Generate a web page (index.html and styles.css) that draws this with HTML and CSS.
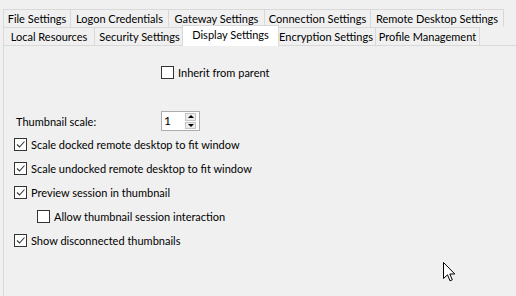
FILE: index.html
```html
<!DOCTYPE html>
<html lang="en">

<head>
    <meta charset="UTF-8">
    <title>Display Settings</title>
    <link rel="stylesheet" href="styles.css">
</head>

<body>
    <div class="tabs">
        <div class="tab-row">
            <div class="tab t-file">File Settings</div>
            <div class="tab t-logon">Logon Credentials</div>
            <div class="tab t-gateway">Gateway Settings</div>
            <div class="tab t-conn">Connection Settings</div>
            <div class="tab t-remote">Remote Desktop Settings</div>
        </div>
        <div class="tab-row">
            <div class="tab t-local">Local Resources</div>
            <div class="tab t-security">Security Settings</div>
            <div class="tab t-display selected">Display Settings</div>
            <div class="tab t-encrypt">Encryption Settings</div>
            <div class="tab t-profile">Profile Management</div>
        </div>
    </div>

    <div class="panel">
        <label class="check-row inherit">
            <span class="box"></span>
            <span>Inherit from parent</span>
        </label>

        <div class="scale-row">
            <span class="scale-label">Thumbnail scale:</span>
            <div class="spinner">
                <span class="spin-value">1</span>
                <div class="spin-buttons">
                    <span class="spin-btn"><span class="arrow-up"></span></span>
                    <span class="spin-btn"><span class="arrow-down"></span></span>
                </div>
            </div>
        </div>

        <label class="check-row">
            <span class="box checked"><svg viewBox="0 0 11 11" width="11" height="11"><path d="M2 5.5 L4.5 8 L9.5 2.5" fill="none" stroke="#333" stroke-width="1.1"/></svg></span>
            <span>Scale docked remote desktop to fit window</span>
        </label>
        <label class="check-row">
            <span class="box checked"><svg viewBox="0 0 11 11" width="11" height="11"><path d="M2 5.5 L4.5 8 L9.5 2.5" fill="none" stroke="#333" stroke-width="1.1"/></svg></span>
            <span>Scale undocked remote desktop to fit window</span>
        </label>
        <label class="check-row">
            <span class="box checked"><svg viewBox="0 0 11 11" width="11" height="11"><path d="M2 5.5 L4.5 8 L9.5 2.5" fill="none" stroke="#333" stroke-width="1.1"/></svg></span>
            <span>Preview session in thumbnail</span>
        </label>
        <label class="check-row indent">
            <span class="box"></span>
            <span>Allow thumbnail session interaction</span>
        </label>
        <label class="check-row">
            <span class="box checked"><svg viewBox="0 0 11 11" width="11" height="11"><path d="M2 5.5 L4.5 8 L9.5 2.5" fill="none" stroke="#333" stroke-width="1.1"/></svg></span>
            <span>Show disconnected thumbnails</span>
        </label>
    </div>

    <svg class="cursor" width="13" height="20" viewBox="0 0 13 20">
        <path d="M0.5 0.5 L0.5 16.5 L4.5 12.8 L7 18.8 L9.3 17.8 L6.8 12 L11.8 12 Z" fill="#fff" stroke="#000" stroke-width="1" stroke-linejoin="miter"/>
    </svg>
</body>

</html>
```

FILE: styles.css
```css
body {
    background-color: #f0f0f0;
    font-family: 'Lato', 'Noto Sans', sans-serif;
    font-size: 11px;
    color: #000;
    margin: 0;
    padding: 0;
    width: 516px;
    height: 296px;
    overflow: hidden;
}

.tabs {
    padding-top: 9px;
    padding-left: 3px;
}

.tab-row {
    display: flex;
    height: 18px;
}

.tab {
    box-sizing: border-box;
    height: 18px;
    border: 1px solid #d9d9d9;
    border-bottom: none;
    margin-left: -1px;
    text-align: center;
    line-height: 18px;
    white-space: nowrap;
    background-color: #f0f0f0;
}

.tab:first-child {
    margin-left: 0;
}

.tab.selected {
    position: relative;
    z-index: 2;
    background-color: #fff;
    height: 21px;
    margin-top: -2px;
    margin-left: -3px;
    margin-right: -2px;
    line-height: 17px;
}

.t-file { width: 68px; }
.t-logon { width: 99px; }
.t-gateway { width: 97px; }
.t-conn { width: 107px; }
.t-remote { width: 134px; }

.t-local { width: 92px; }
.t-security { width: 91px; }
.t-display { width: 97px; }
.t-encrypt { width: 100px; }
.t-profile { width: 105px; }

.panel {
    box-sizing: border-box;
    margin-left: 3px;
    border-top: 1px solid #d9d9d9;
    border-left: 1px solid #d9d9d9;
    height: 251px;
    padding-top: 14px;
}

.check-row {
    display: flex;
    align-items: center;
    height: 24px;
    padding-left: 10px;
}

.check-row.inherit {
    padding-left: 157px;
}

.check-row.indent {
    padding-left: 33px;
}

.box {
    box-sizing: border-box;
    width: 13px;
    height: 13px;
    border: 1px solid #333;
    background-color: #fff;
    margin-right: 4px;
    display: flex;
    align-items: center;
    justify-content: center;
}

.box svg {
    display: block;
}

.scale-row {
    display: flex;
    align-items: center;
    height: 22px;
    margin-top: 26px;
    padding-left: 12px;
}

.scale-label {
    width: 145px;
}

.spinner {
    box-sizing: border-box;
    width: 39px;
    height: 20px;
    border: 1px solid #adadad;
    background-color: #fff;
    display: flex;
    justify-content: space-between;
}

.spin-value {
    padding-left: 2px;
    line-height: 17px;
    font-size: 12px;
}

.spin-buttons {
    display: flex;
    flex-direction: column;
    padding: 1px 3px 1px 0;
}

.spin-btn {
    box-sizing: border-box;
    width: 11px;
    height: 8px;
    border: 1px solid #c5c5c5;
    background-color: #ececec;
    display: flex;
    align-items: center;
    justify-content: center;
}

.spin-btn + .spin-btn {
    margin-top: 1px;
}

.arrow-up {
    width: 0;
    height: 0;
    border-left: 3px solid transparent;
    border-right: 3px solid transparent;
    border-bottom: 3px solid #000;
}

.arrow-down {
    width: 0;
    height: 0;
    border-left: 3px solid transparent;
    border-right: 3px solid transparent;
    border-top: 3px solid #000;
}

.cursor {
    position: absolute;
    left: 443px;
    top: 262px;
}
```
